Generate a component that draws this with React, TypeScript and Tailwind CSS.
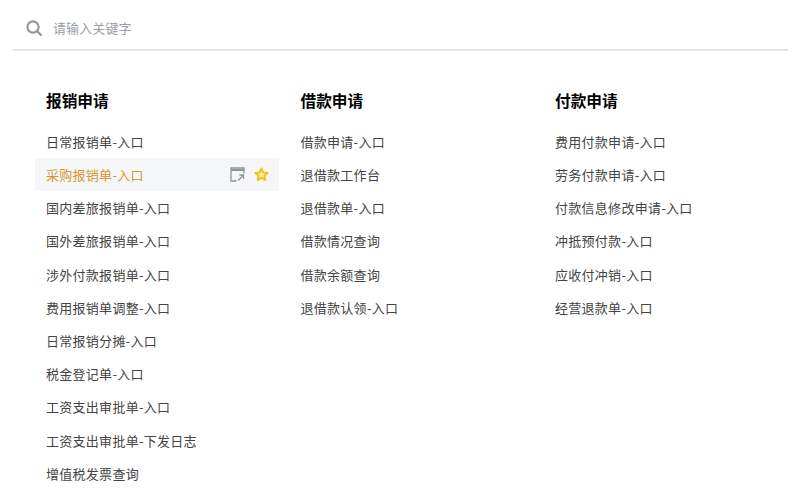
import React from 'react';

const columns = [
  {
    title: '报销申请',
    items: [
      '日常报销单-入口',
      '采购报销单-入口',
      '国内差旅报销单-入口',
      '国外差旅报销单-入口',
      '涉外付款报销单-入口',
      '费用报销单调整-入口',
      '日常报销分摊-入口',
      '税金登记单-入口',
      '工资支出审批单-入口',
      '工资支出审批单-下发日志',
      '增值税发票查询',
    ],
  },
  {
    title: '借款申请',
    items: ['借款申请-入口', '退借款工作台', '退借款单-入口', '借款情况查询', '借款余额查询', '退借款认领-入口'],
  },
  {
    title: '付款申请',
    items: ['费用付款申请-入口', '劳务付款申请-入口', '付款信息修改申请-入口', '冲抵预付款-入口', '应收付冲销-入口', '经营退款单-入口'],
  },
];

const activeItem = '采购报销单-入口';

const SearchIcon = () => (
  <svg width="16" height="16" viewBox="0 0 16 16" fill="none" stroke="#94969d" strokeWidth="2.2">
    <circle cx="7" cy="7" r="5.6" />
    <path d="M11.2 11.2L15 15" strokeLinecap="round" />
  </svg>
);

const OpenWindowIcon = () => (
  <svg width="15" height="15" viewBox="0 0 15 15" fill="none" stroke="#8f949c" strokeWidth="1.3">
    <path d="M14 6.5V1H1v13h5.5" />
    <path d="M1 3h13" strokeWidth="2" />
    <path d="M8 13.5L13 8.5M9.5 8H13.5V12" />
  </svg>
);

const StarIcon = () => (
  <svg width="15" height="15" viewBox="0 0 24 24" fill="#fdf0b8" stroke="#f6c21f" strokeWidth="3.4" strokeLinejoin="round">
    <path d="M12 2.5l2.9 6.2 6.8.8-5 4.6 1.3 6.7-6-3.4-6 3.4 1.3-6.7-5-4.6 6.8-.8z" />
  </svg>
);

export default function App() {
  return (
    <div className="w-[800px] h-[502px] overflow-hidden bg-white font-['Noto_Sans_CJK_SC','Noto_Sans',sans-serif]">
      <div className="mx-[13px] w-[775px] h-[51px] flex items-center gap-[11px] pl-[13px] pt-[6px] border-b-2 border-[#e3e4e6]">
        <SearchIcon />
        <span className="text-[13px] tracking-[0.1px] text-[#9b9ea5]">请输入关键字</span>
      </div>
      <div className="flex pl-[35px] pt-[33px]">
        {columns.map((col) => (
          <div key={col.title} className="w-[254.5px] shrink-0">
            <h2 className="pl-[11px] h-[33px] leading-[33px] text-[15.7px] font-bold text-black">{col.title}</h2>
            <ul className="mt-[8px] w-[244px]">
              {col.items.map((item) => {
                const active = item === activeItem;
                return (
                  <li
                    key={item}
                    className={`h-[33.2px] pl-[11px] pr-[10px] flex items-center justify-between text-[13px] tracking-[0.28px] ${
                      active ? 'bg-[#f5f6f8] text-[#d9952f]' : 'text-[#444444]'
                    }`}
                  >
                    <span>{item}</span>
                    {active && (
                      <span className="flex items-center gap-[9px]">
                        <OpenWindowIcon />
                        <StarIcon />
                      </span>
                    )}
                  </li>
                );
              })}
            </ul>
          </div>
        ))}
      </div>
    </div>
  );
}
